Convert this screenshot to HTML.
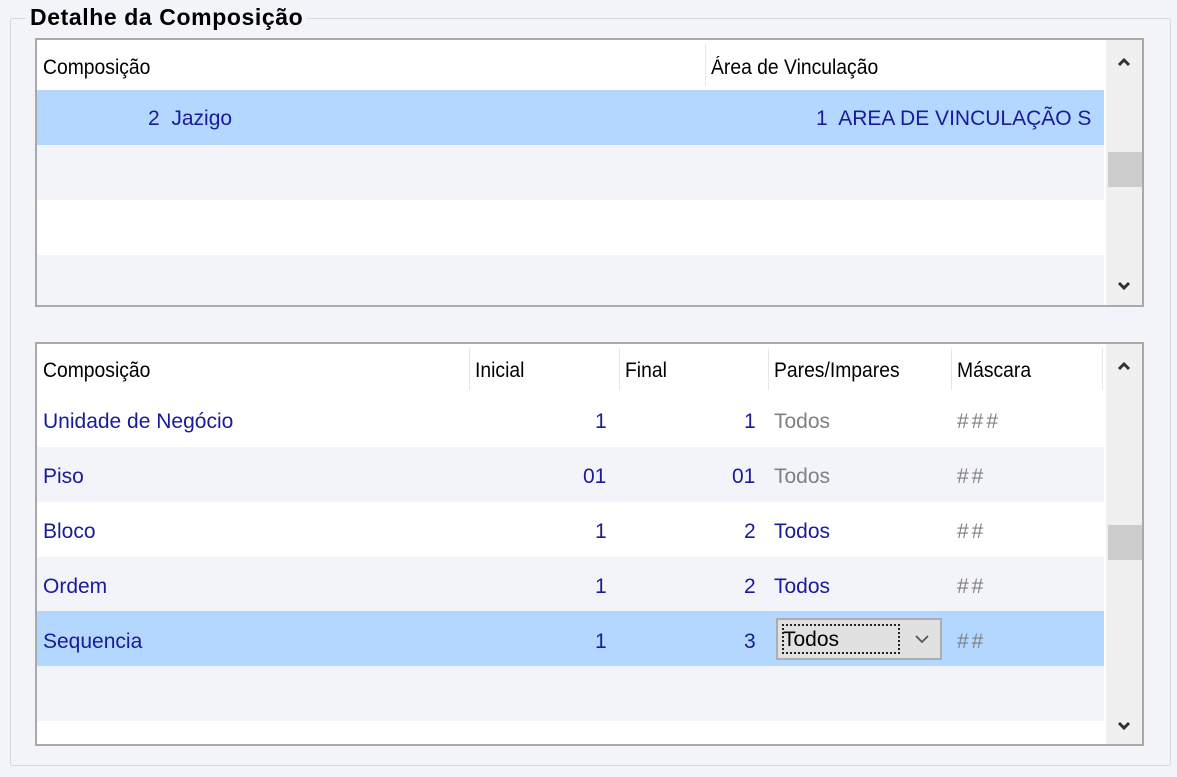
<!DOCTYPE html>
<html><head><style>
*{margin:0;padding:0;box-sizing:border-box}
body{width:1177px;height:777px;background:#f3f4f9;position:relative;overflow:hidden;font-family:"Liberation Sans",sans-serif;font-size:21px;color:#000}
.a{position:absolute;white-space:nowrap}
.grp{position:absolute;left:10px;top:18px;width:1161px;height:748px;border:1px solid #d8d8dc;border-radius:3px}
.title{left:26px;top:4px;font-weight:bold;font-size:23px;letter-spacing:.6px;background:#f3f4f9;padding:0 4px}
.box{position:absolute;border:2px solid #a9a9a9;background:#fff;overflow:hidden}
.row{position:absolute;left:0;height:55px}
.sb{position:absolute;right:0;top:0;width:36px;bottom:0;background:#f0f0f0}
.th{position:absolute;left:2px;width:36px;height:35px;background:#cdcdcd}
.hd{color:#000;transform:scaleX(.92);transform-origin:left}
.b{color:#1a1a9a}
.g{color:#808080}
.h{letter-spacing:3px}
.sep{position:absolute;width:1px;top:4px;height:42px;background:#e6e6e6}
.arr{position:absolute;left:8px;width:20px;height:20px}
</style></head><body>
<div class="grp"></div>
<div class="a title">Detalhe da Composição</div>

<div class="box" style="left:35px;top:38px;width:1109px;height:269px">
 <div class="row" style="top:50px;width:1067px;background:#b3d7ff"></div>
 <div class="row" style="top:105px;width:1067px;background:#f3f4f9"></div>
 <div class="row" style="top:215px;width:1067px;background:#f3f4f9"></div>
 <div class="sep" style="left:668px"></div>
 <div class="a hd" style="left:6px;top:16px">Composição</div>
 <div class="a hd" style="left:674px;top:16px">Área de Vinculação</div>
 <div class="a b" style="left:111px;top:67px">2&nbsp; Jazigo</div>
 <div class="a b" style="left:779px;top:67px">1&nbsp; AREA DE VINCULAÇÃO S</div>
 <div class="sb"><svg class="arr" style="top:12px" viewBox="0 0 20 20"><path d="M5 13 L10 8 L15 13" fill="none" stroke="#333" stroke-width="3"/></svg>
 <div class="th" style="top:112px"></div>
 <svg class="arr" style="top:236px" viewBox="0 0 20 20"><path d="M5 7 L10 12 L15 7" fill="none" stroke="#333" stroke-width="3"/></svg></div>
</div>

<div class="box" style="left:35px;top:342px;width:1109px;height:404px">
 <div class="row" style="top:103px;width:1067px;background:#f3f4f9"></div>
 <div class="row" style="top:213px;width:1067px;background:#f3f4f9"></div>
 <div class="row" style="top:267px;width:1067px;background:#b3d7ff"></div>
 <div class="row" style="top:322px;width:1067px;background:#f3f4f9"></div>
 <div class="sep" style="left:432px"></div><div class="sep" style="left:582px"></div><div class="sep" style="left:731px"></div><div class="sep" style="left:914px"></div><div class="sep" style="left:1065px"></div>
 <div class="a hd" style="left:6px;top:15px">Composição</div>
 <div class="a hd" style="left:438px;top:15px">Inicial</div>
 <div class="a hd" style="left:588px;top:15px">Final</div>
 <div class="a hd" style="left:737px;top:15px">Pares/Impares</div>
 <div class="a hd" style="left:920px;top:15px">Máscara</div>

 <div class="a b" style="left:6px;top:66px">Unidade de Negócio</div>
 <div class="a b" style="left:558px;top:66px">1</div><div class="a b" style="left:707px;top:66px">1</div>
 <div class="a g" style="left:737px;top:66px">Todos</div><div class="a g h" style="left:920px;top:66px">###</div>

 <div class="a b" style="left:6px;top:121px">Piso</div>
 <div class="a b" style="left:546px;top:121px">01</div><div class="a b" style="left:695px;top:121px">01</div>
 <div class="a g" style="left:737px;top:121px">Todos</div><div class="a g h" style="left:920px;top:121px">##</div>

 <div class="a b" style="left:6px;top:176px">Bloco</div>
 <div class="a b" style="left:558px;top:176px">1</div><div class="a b" style="left:707px;top:176px">2</div>
 <div class="a b" style="left:737px;top:176px">Todos</div><div class="a g h" style="left:920px;top:176px">##</div>

 <div class="a b" style="left:6px;top:231px">Ordem</div>
 <div class="a b" style="left:558px;top:231px">1</div><div class="a b" style="left:707px;top:231px">2</div>
 <div class="a b" style="left:737px;top:231px">Todos</div><div class="a g h" style="left:920px;top:231px">##</div>

 <div class="a b" style="left:6px;top:286px">Sequencia</div>
 <div class="a b" style="left:558px;top:286px">1</div><div class="a b" style="left:707px;top:286px">3</div>
 <div class="a" style="left:739px;top:274px;width:166px;height:42px;background:#e1e1e1;border:2px solid #adadad"></div>
 <div class="a" style="left:745px;top:280px;width:118px;height:30px;border:2px dotted #222"></div>
 <div class="a" style="left:746px;top:284px">Todos</div>
 <svg class="a" style="left:875px;top:285px" width="20" height="20" viewBox="0 0 20 20"><path d="M4 7 L10 13 L16 7" fill="none" stroke="#555" stroke-width="1.8"/></svg>
 <div class="a g h" style="left:920px;top:286px">##</div>

 <div class="sb"><svg class="arr" style="top:12px" viewBox="0 0 20 20"><path d="M5 13 L10 8 L15 13" fill="none" stroke="#333" stroke-width="3"/></svg>
 <div class="th" style="top:181px"></div>
 <svg class="arr" style="top:372px" viewBox="0 0 20 20"><path d="M5 7 L10 12 L15 7" fill="none" stroke="#333" stroke-width="3"/></svg></div>
</div>
</body></html>
